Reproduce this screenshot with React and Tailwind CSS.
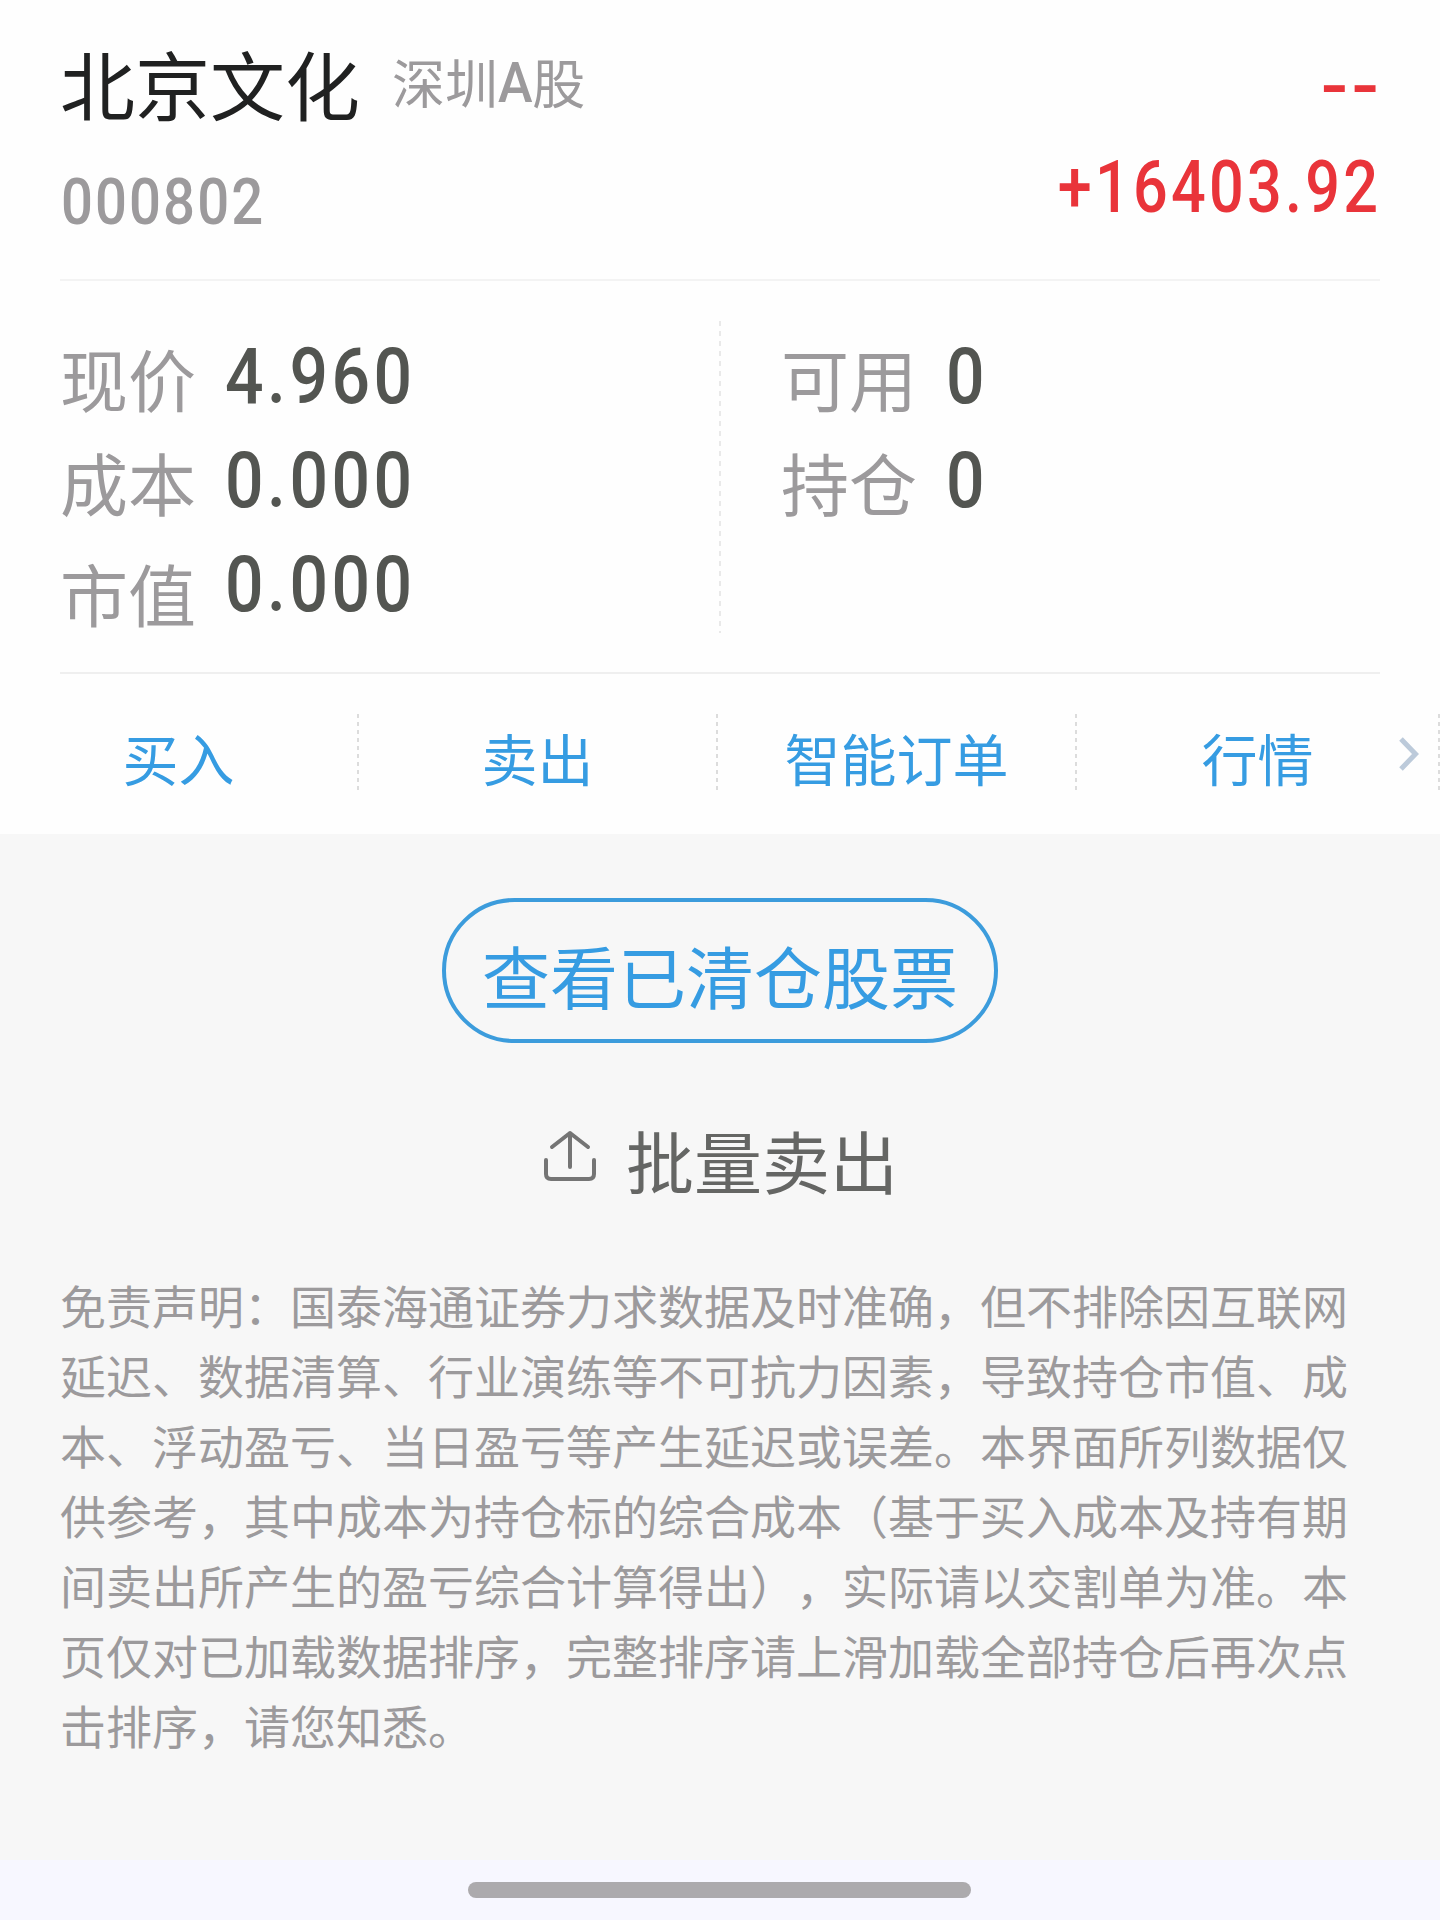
const disclaimer = [
  "免责声明：国泰海通证券力求数据及时准确，但不排除因互联网",
  "延迟、数据清算、行业演练等不可抗力因素，导致持仓市值、成",
  "本、浮动盈亏、当日盈亏等产生延迟或误差。本界面所列数据仅",
  "供参考，其中成本为持仓标的综合成本（基于买入成本及持有期",
  "间卖出所产生的盈亏综合计算得出），实际请以交割单为准。本",
  "页仅对已加载数据排序，完整排序请上滑加载全部持仓后再次点",
  "击排序，请您知悉。",
];

const actions = ["买入", "卖出", "智能订单", "行情"];

function Metric({ label, value, labelClass = "pt-[3px]" }) {
  return (
    <div className="flex h-[104px] items-center">
      <span className={"w-[165px] text-[68px] leading-none text-[#9c9a9c] " + labelClass}>{label}</span>
      <span className="origin-left scale-x-[0.87] pt-[2px] font-['Roboto'] text-[78px] leading-none font-medium tracking-[4px] text-[#535551]">
        {value}
      </span>
    </div>
  );
}

function Header() {
  return (
    <header className="mx-[60px] flex h-[281px] justify-between border-b-2 border-[#f3f3f3]">
      <div>
        <div className="flex h-[160px] items-center">
          <h1 className="pt-[5px] text-[75px] leading-none text-[#202121]">北京文化</h1>
          <div className="ml-[32px] flex items-center pt-[3px] text-[53px] leading-none text-[#9c9a9c]">
            <span>深圳</span>
            <span className="-mr-[3px] origin-left scale-x-[0.93] pt-[3px] font-['Roboto'] text-[56px] font-medium">A</span>
            <span>股</span>
          </div>
        </div>
        <div className="ml-px flex h-[84px] origin-left scale-x-[0.865] items-center font-['Roboto'] text-[65px] leading-none font-medium tracking-[2.4px] text-[#9c9a9c]">
          000802
        </div>
      </div>
      <div className="flex origin-right scale-x-[0.85] flex-col items-end font-['Roboto'] text-[72px] leading-none font-medium text-[#e9343a]">
        <div className="-mr-[3px] flex h-[160px] origin-right scale-x-[1.32] items-center pt-[14px] tracking-[3px]">--</div>
        <div className="-mr-[2px] flex h-[54px] items-center pt-[2px] tracking-[3.8px]">+16403.92</div>
      </div>
    </header>
  );
}

function VerticalDash({ className }) {
  return <div className={"w-[2px] shrink-0 " + className} />;
}

export default function App() {
  return (
    <div className="flex h-[1920px] w-[1440px] flex-col overflow-hidden bg-[#f7f7f7] font-['Noto_Sans_CJK_SC',sans-serif]">
      <section className="h-[834px] bg-[#fefefe]">
        <Header />
        <div className="mx-[60px] flex h-[393px] border-b-2 border-[#efefef] pt-[40px]">
          <div className="w-[659px] pt-[3px]">
            <Metric label="现价" value="4.960" />
            <Metric label="成本" value="0.000" />
            <Metric label="市值" value="0.000" labelClass="pt-[18px]" />
          </div>
          <VerticalDash className="h-[312px] bg-[repeating-linear-gradient(to_bottom,#e9e9e9_0px,#e9e9e9_5px,transparent_5px,transparent_10px)]" />
          <div className="pt-[3px] pl-[60px]">
            <Metric label="可用" value="0" />
            <Metric label="持仓" value="0" />
          </div>
        </div>
        <nav className="relative flex h-[160px] pt-[40px]">
          {actions.map((label) => (
            <div key={label} className="flex h-[76px] w-[359px] items-center last-of-type:w-[363px]">
              <span className="flex-1 pt-[10px] text-center text-[56px] leading-none text-[#369ce2]">{label}</span>
              <VerticalDash className="h-[76px] bg-[repeating-linear-gradient(to_bottom,#dcdcdc_0px,#dcdcdc_4px,transparent_4px,transparent_8px)]" />
            </div>
          ))}
          <svg className="absolute top-[60px] left-[1396px]" width="26" height="40" viewBox="0 0 26 40" fill="none" stroke="#bccada" strokeWidth="5">
            <path d="M5 5 L19.5 20 L5 35" />
          </svg>
        </nav>
      </section>

      <main className="flex h-[1026px] flex-col items-center pt-[64px]">
        <button className="flex h-[145px] w-[556px] items-center justify-center rounded-full border-4 border-[#3c9cdc] pt-[8px] text-[68px] leading-none text-[#369ce2]">
          查看已清仓股票
        </button>
        <button className="mt-[73px] flex h-[82px] items-center text-[68px] leading-none text-[#656664]">
          <svg className="mr-[30px] mb-[3px]" width="54" height="54" viewBox="0 0 54 54" fill="none" stroke="#757575" strokeWidth="4" strokeLinecap="round">
            <path d="M4 31 V45 Q4 50 9 50 H47 Q52 50 52 45 V31" />
            <path d="M28 4 V38 M10 18 L28 4 L46 18" strokeLinejoin="round" />
          </svg>
          <span className="pt-[5px]">批量卖出</span>
        </button>
        <div className="mt-[71px] w-[1320px] text-[46px] leading-[70px] whitespace-nowrap text-[#9c9a9c] [text-spacing-trim:space-all]">
          {disclaimer.map((line) => (
            <p key={line}>{line}</p>
          ))}
        </div>
      </main>

      <footer className="flex h-[60px] justify-center bg-[#f7f7ff] pt-[22px]">
        <div className="mr-px h-[16px] w-[503px] rounded-full bg-[#acaaad]" />
      </footer>
    </div>
  );
}
